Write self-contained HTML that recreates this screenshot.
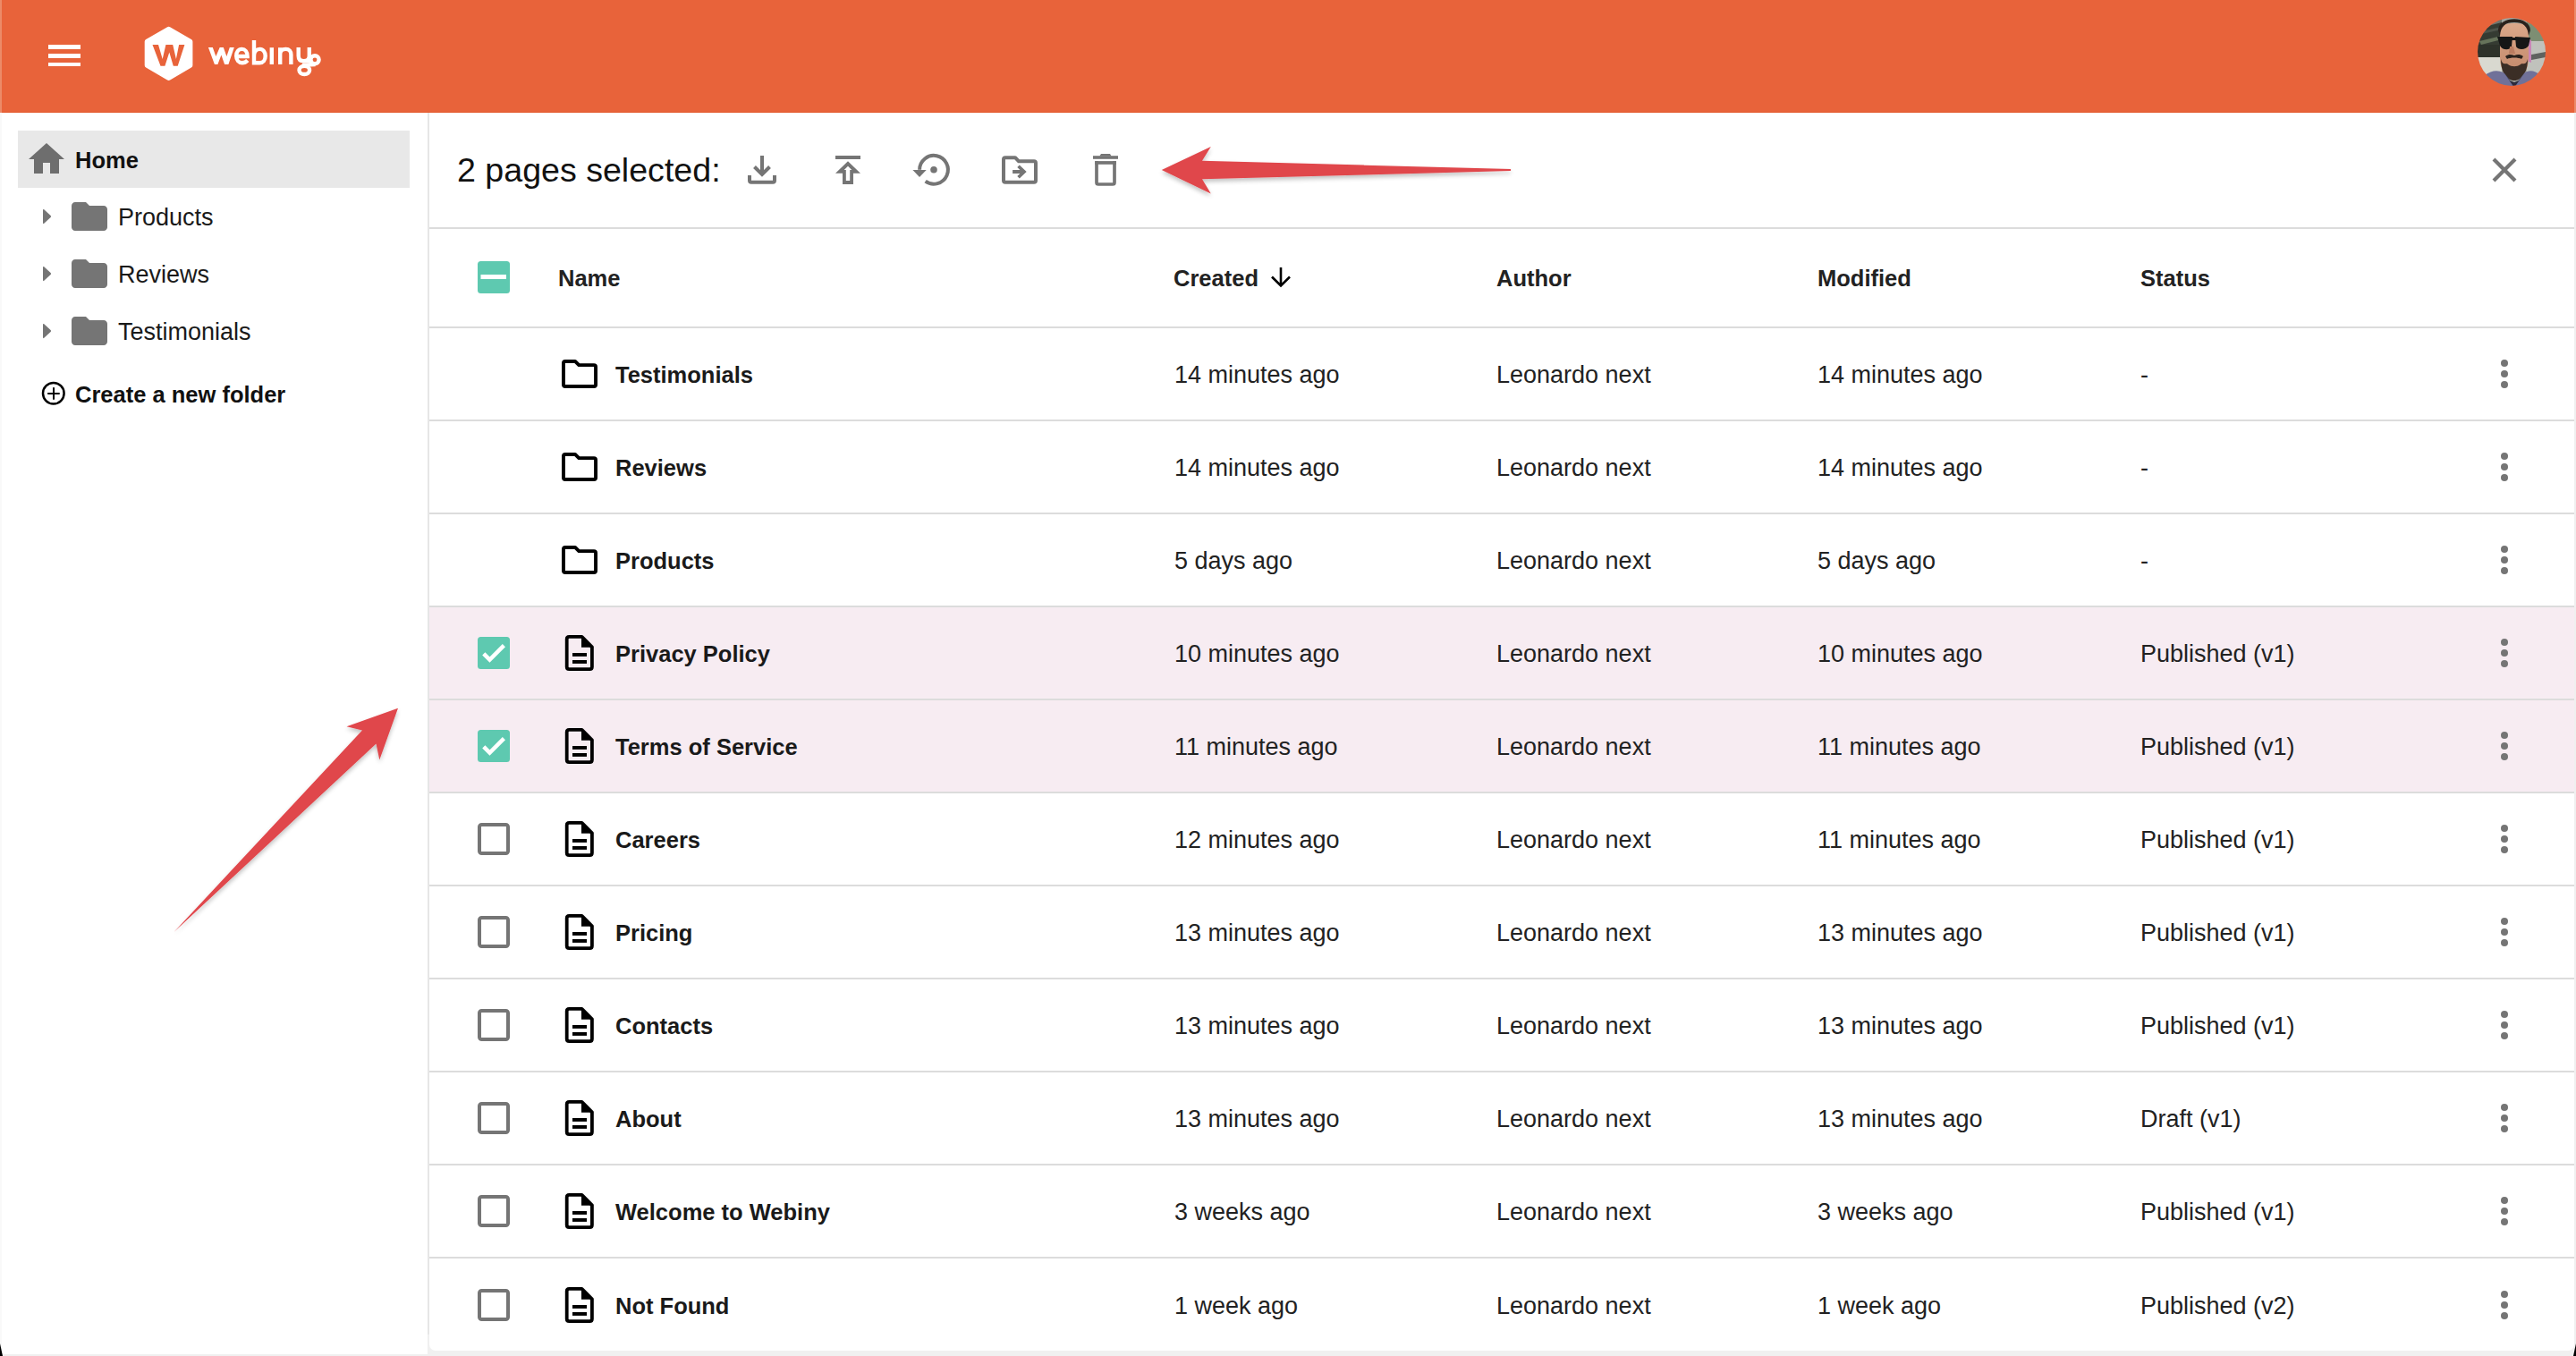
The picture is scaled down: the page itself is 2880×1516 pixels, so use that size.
<!DOCTYPE html>
<html><head><meta charset="utf-8"><style>
*{margin:0;padding:0;box-sizing:border-box}
html,body{width:2880px;height:1516px;overflow:hidden;background:#f0f0f0;font-family:"Liberation Sans",sans-serif}
.a{position:absolute}
.t{position:absolute;white-space:nowrap;line-height:1}
svg{position:absolute;overflow:visible}
</style></head>
<body>
<div class="a" style="left:0;top:0;width:2880px;height:126px;background:#e8633a"></div>
<div class="a" style="left:0;top:125px;width:2880px;height:1px;background:#e3582c"></div>
<div class="a" style="left:0;top:0;width:2px;height:126px;background:#ec8a68"></div>
<div class="a" style="left:2878px;top:0;width:2px;height:126px;background:#ec8a68"></div>
<div class="a" style="left:54px;top:50px;width:36px;height:4.5px;background:#fff"></div>
<div class="a" style="left:54px;top:60px;width:36px;height:4.5px;background:#fff"></div>
<div class="a" style="left:54px;top:69.5px;width:36px;height:4.5px;background:#fff"></div>
<svg style="left:0;top:0" width="400" height="126" viewBox="0 0 400 126">
<path d="M188.6 32.9 L212.4 46.5 L212.4 73 L188.6 87 L164.7 73 L164.7 46.5 Z" fill="#fff" stroke="#fff" stroke-width="6" stroke-linejoin="round"/>
<path d="M170.5 50.1 L177 50.1 L181.7 66 L185.4 50.1 L193.2 50.1 L196.9 66 L200.1 50.1 L206.4 50.1 L198.7 73.8 L193.8 73.8 L189.3 58.5 L184.4 73.8 L179.5 73.8 Z" fill="#e8633a"/>
<path d="M232.9 52.9 L237.8 52.9 L241.4 62.9 L245.7 52.9 L249.8 52.9 L253.4 62.9 L256.8 52.9 L261.8 52.9 L255.4 72 L251.1 72 L247.4 61.4 L243.4 72 L239.9 72 Z" fill="#fff"/>
<g fill="none" stroke="#fff" stroke-width="4.4">
<path d="M264.2 63 L276.6 63 C276.6 58 274 54.9 270.4 54.9 C266.5 54.9 264.2 58.2 264.2 62.6 C264.2 67.2 266.8 70.3 270.8 70.3 C273.2 70.3 275.2 69.3 276.8 67.5"/>
<path d="M284 45.1 L284 70.3 L290.4 70.3 C294.2 70.3 296.7 67.2 296.7 62.6 C296.7 58.2 294.2 54.9 290.4 54.9 C286.8 54.9 284 58 284 62.6"/>
<path d="M303.8 53.2 L303.8 72"/>
<path d="M313.2 53.2 L313.2 72 M313.2 60.5 C313.2 56.5 316 54.9 319.5 54.9 C323.5 54.9 325.4 57.5 325.4 61 L325.4 72"/>
<path d="M333.7 52.9 L333.7 62.5 C333.7 66.3 336 68.3 339.7 68.3 C343.5 68.3 345.8 66.3 345.8 62.5 M345.8 52.9 L345.8 70"/>
<ellipse cx="352" cy="66.8" rx="4.6" ry="4.6"/>
<path d="M352.5 72 L338 72.8"/>
<ellipse cx="340.3" cy="78.4" rx="5.8" ry="4.6"/>
</g>
</svg>
<svg style="left:2770px;top:20px" width="76" height="76" viewBox="0 0 76 76">
<defs><clipPath id="avc"><circle cx="38" cy="38" r="38"/></clipPath>
<filter id="avblur" x="-5%" y="-5%" width="110%" height="110%"><feGaussianBlur stdDeviation="0.7"/></filter>
<linearGradient id="skin" x1="0" y1="0" x2="0" y2="1"><stop offset="0" stop-color="#dba88a"/><stop offset="1" stop-color="#c08567"/></linearGradient></defs>
<g clip-path="url(#avc)"><g filter="url(#avblur)">
<rect x="-2" y="-2" width="80" height="80" fill="#a3a69f"/>
<rect x="0" y="0" width="27" height="46" fill="#353b33"/>
<path d="M0 6 L27 0 L27 5 L0 12 Z" fill="#70756d"/>
<path d="M0 16 L27 10 L27 13 L0 19 Z" fill="#4d534a"/>
<path d="M2 26 L27 20 L27 24 L4 30 Z" fill="#66735a"/>
<rect x="0" y="30" width="27" height="16" fill="#2e302c"/>
<rect x="0" y="44" width="27" height="20" fill="#d9d9d0"/>
<rect x="55" y="0" width="21" height="28" fill="#7d8e73"/>
<rect x="55" y="26" width="21" height="36" fill="#c0c2bc"/>
<path d="M55 42 L76 38 L76 44 L55 48 Z" fill="#5f625e"/>
<path d="M55 22 L60 25 L60 50 L55 48 Z" fill="#c986b6"/>
<path d="M25 12 C25 4 57 4 57 12 L57 44 C57 60 49 68 41 68 C33 68 25 60 25 44 Z" fill="url(#skin)"/>
<path d="M23 14 C23 -3 59 -3 59 14 L57 20 C56 9 51 5 41 5 C31 5 26 9 25 20 Z" fill="#2a231f"/>
<path d="M22 21 L39 21 L38 32 C36 37 27 36 25 31 Z M42 21 L59 22 L57 31 C54 36 45 36 43 32 Z M38 22 L43 22 L43 25 L38 25 Z" fill="#131615"/>
<path d="M36 32 L40 32 L42 40 L35 40 Z" fill="#b97c60"/>
<path d="M31 43 C35 40 38 41 41 42 C44 41 47 40 51 43 L49 46 C46 44 36 44 33 46 Z" fill="#2b221d"/>
<path d="M26 46 C28 54 32 50 34 52 C38 55 44 55 48 52 C50 50 54 54 56 46 C56 60 50 70 41 70 C32 70 26 60 26 46 Z" fill="#3a2d25"/>
<path d="M0 76 L8 64 C16 58 24 58 30 62 L41 76 Z M76 76 L70 64 C64 58 56 58 52 62 L41 76 Z" fill="#6f7199"/>
<path d="M30 62 L41 78 L52 62 L46 70 L41 72 L36 70 Z" fill="#2b2c3c"/>
</g></g></svg>
<div class="a" style="left:0;top:126px;width:478px;height:1388px;background:#fff"></div>
<div class="a" style="left:0;top:126px;width:2px;height:1388px;background:#f9f9f9"></div>
<div class="a" style="left:478px;top:126px;width:2px;height:1366px;background:#e6e6e6"></div>
<div class="a" style="left:20px;top:146px;width:438px;height:64px;background:#e8e8e8"></div>
<svg style="left:28px;top:154px" width="48" height="48" viewBox="0 0 24 24"><path d="M10 20v-6h4v6h5v-8h3L12 3 2 12h3v8z" fill="#6e6e6e"/></svg>
<div class="t" style="left:84.0px;top:167.4px;font-size:25.5px;font-weight:700;color:#111;">Home</div>

<svg style="left:0;top:0" width="130" height="500"><path d="M49 234 L56.6 241 Q57.6 242 56.6 243 L49 250 Q48 250.5 48 249 L48 235 Q48 233.5 49 234 Z" fill="#757575"/></svg>
<svg style="left:76px;top:218px" width="48" height="48" viewBox="0 0 24 24"><path d="M10 4H4c-1.1 0-1.99.9-1.99 2L2 18c0 1.1.9 2 2 2h16c1.1 0 2-.9 2-2V8c0-1.1-.9-2-2-2h-8l-2-2z" fill="#757575"/></svg>
<div class="t" style="left:132.0px;top:230.1px;font-size:27.0px;font-weight:400;color:#1a1a1a;">Products</div>

<svg style="left:0;top:0" width="130" height="500"><path d="M49 298 L56.6 305 Q57.6 306 56.6 307 L49 314 Q48 314.5 48 313 L48 299 Q48 297.5 49 298 Z" fill="#757575"/></svg>
<svg style="left:76px;top:282px" width="48" height="48" viewBox="0 0 24 24"><path d="M10 4H4c-1.1 0-1.99.9-1.99 2L2 18c0 1.1.9 2 2 2h16c1.1 0 2-.9 2-2V8c0-1.1-.9-2-2-2h-8l-2-2z" fill="#757575"/></svg>
<div class="t" style="left:132.0px;top:294.1px;font-size:27.0px;font-weight:400;color:#1a1a1a;">Reviews</div>

<svg style="left:0;top:0" width="130" height="500"><path d="M49 362 L56.6 369 Q57.6 370 56.6 371 L49 378 Q48 378.5 48 377 L48 363 Q48 361.5 49 362 Z" fill="#757575"/></svg>
<svg style="left:76px;top:346px" width="48" height="48" viewBox="0 0 24 24"><path d="M10 4H4c-1.1 0-1.99.9-1.99 2L2 18c0 1.1.9 2 2 2h16c1.1 0 2-.9 2-2V8c0-1.1-.9-2-2-2h-8l-2-2z" fill="#757575"/></svg>
<div class="t" style="left:132.0px;top:358.1px;font-size:27.0px;font-weight:400;color:#1a1a1a;">Testimonials</div>

<svg style="left:0;top:0" width="130" height="500"><circle cx="59.8" cy="439.8" r="11.8" fill="none" stroke="#000" stroke-width="2.5"/><rect x="53.2" y="439" width="13.5" height="2" fill="#000"/><rect x="59" y="433.2" width="2" height="13.5" fill="#000"/></svg>
<div class="t" style="left:84.0px;top:429.4px;font-size:25.5px;font-weight:700;color:#111;">Create a new folder</div>

<div class="a" style="left:480px;top:126px;width:2398px;height:128px;background:#fff"></div>
<div class="a" style="left:480px;top:254px;width:2398px;height:2px;background:#dcdcdc"></div>
<div class="a" style="left:2878px;top:126px;width:2px;height:1390px;background:#f0f0f0"></div>
<div class="t" style="left:511.0px;top:172.0px;font-size:37.6px;font-weight:400;color:#111;">2 pages selected:</div>

<svg style="left:0;top:0" width="1300" height="260">
<g fill="none" stroke="#757575" stroke-width="4">
<path d="M852 174 L852 196"/>
<path d="M843.5 186.5 L852 195 L860.5 186.5"/>
<path d="M838 196 L838 201.7 Q838 203.7 840 203.7 L864 203.7 Q866 203.7 866 201.7 L866 196"/>
</g>
<rect x="934" y="174" width="28" height="4" fill="#757575"/>
<path fill-rule="evenodd" d="M948 180.2 L962 193.8 L954 193.8 L954 206 L942 206 L942 193.8 L934 193.8 Z M948 185.7 L952.3 190 L950.2 190 L950.2 201.9 L945.8 201.9 L945.8 190 L943.7 190 Z" fill="#757575"/>
<path d="M1028.1 189.8 A15.9 15.9 0 1 1 1034.65 202.66" fill="none" stroke="#757575" stroke-width="4"/>
<path d="M1020.4 190 L1035.7 190 L1028 198 Z" fill="#757575"/>
<circle cx="1044" cy="189.8" r="3.8" fill="#757575"/>
<path d="M1122 178 Q1122 176.2 1124 176.2 L1135 176.2 L1139 180.3 L1156 180.3 Q1158 180.3 1158 182.3 L1158 201.8 Q1158 203.8 1156 203.8 L1124 203.8 Q1122 203.8 1122 201.8 Z" fill="none" stroke="#757575" stroke-width="4" stroke-linejoin="round"/>
<path d="M1132.1 190.1 L1140.4 190.1 L1137.3 187 L1139.8 184.4 L1147.7 191.9 L1139.8 199.6 L1137.3 197 L1140.4 193.9 L1132.1 193.9 Z" fill="#757575"/>
<rect x="1222" y="174.2" width="28" height="3.6" fill="#757575"/>
<path d="M1229.3 174.5 L1231 172.1 L1241 172.1 L1242.6 174.5 Z" fill="#757575"/>
<path d="M1226 180.1 L1226 204 Q1226 206 1228 206 L1244 206 Q1246 206 1246 204 L1246 180.1" fill="none" stroke="#757575" stroke-width="3.7"/>
<rect x="1224.2" y="180.1" width="23.8" height="3.7" fill="#757575"/>
</g>
</svg>
<svg style="left:0;top:0" width="2880" height="260"><path d="M2788 178 L2812 202 M2812 178 L2788 202" stroke="#757575" stroke-width="4.2" fill="none"/></svg>
<div class="a" style="left:480px;top:256px;width:2398px;height:109px;background:#fff"></div>
<div class="a" style="left:480px;top:365px;width:2398px;height:2px;background:#dcdcdc"></div>
<svg style="left:534px;top:292px" width="36" height="36" viewBox="0 0 36 36"><rect x="0" y="0" width="36" height="36" rx="3.5" fill="#5ec9b0"/><rect x="3.5" y="15" width="28.5" height="5" fill="#fff"/></svg>
<div class="t" style="left:624.0px;top:299.4px;font-size:25.5px;font-weight:700;color:#222;">Name</div>

<div class="t" style="left:1312.0px;top:299.4px;font-size:25.5px;font-weight:700;color:#222;">Created</div>

<svg style="left:0;top:0" width="1500" height="400"><path d="M1432 299 L1432 319 M1422 309.5 L1432 319.5 L1442 309.5" fill="none" stroke="#000" stroke-width="2.6"/></svg>
<div class="t" style="left:1673.0px;top:299.4px;font-size:25.5px;font-weight:700;color:#222;">Author</div>

<div class="t" style="left:2032.0px;top:299.4px;font-size:25.5px;font-weight:700;color:#222;">Modified</div>

<div class="t" style="left:2393.0px;top:299.4px;font-size:25.5px;font-weight:700;color:#222;">Status</div>

<div class="a" style="left:480px;top:367px;width:2398px;height:102px;background:#fff;"></div>
<div class="a" style="left:480px;top:469px;width:2398px;height:2px;background:#dcdcdc"></div>
<svg style="left:626px;top:398px" width="44" height="40" viewBox="0 0 44 40"><path d="M3.95 8 Q3.95 5.95 6 5.95 L17 5.95 L21.2 10.15 L38 10.15 Q40.05 10.15 40.05 12.2 L40.05 31.9 Q40.05 33.95 38 33.95 L6 33.95 Q3.95 33.95 3.95 31.9 Z" fill="none" stroke="#000" stroke-width="3.9" stroke-linejoin="round"/></svg>
<div class="t" style="left:688.0px;top:407.4px;font-size:25.5px;font-weight:700;color:#1a1a1a;">Testimonials</div>

<div class="t" style="left:1313.0px;top:406.1px;font-size:27.0px;font-weight:400;color:#222;">14 minutes ago</div>

<div class="t" style="left:1673.0px;top:406.1px;font-size:27.0px;font-weight:400;color:#222;">Leonardo next</div>

<div class="t" style="left:2032.0px;top:406.1px;font-size:27.0px;font-weight:400;color:#222;">14 minutes ago</div>

<div class="t" style="left:2393.0px;top:406.1px;font-size:27.0px;font-weight:400;color:#222;">-</div>

<svg style="left:2790px;top:398px" width="20" height="40"><circle cx="10" cy="8" r="4" fill="#757575"/><circle cx="10" cy="20" r="4" fill="#757575"/><circle cx="10" cy="32" r="4" fill="#757575"/></svg>
<div class="a" style="left:480px;top:471px;width:2398px;height:102px;background:#fff;"></div>
<div class="a" style="left:480px;top:573px;width:2398px;height:2px;background:#dcdcdc"></div>
<svg style="left:626px;top:502px" width="44" height="40" viewBox="0 0 44 40"><path d="M3.95 8 Q3.95 5.95 6 5.95 L17 5.95 L21.2 10.15 L38 10.15 Q40.05 10.15 40.05 12.2 L40.05 31.9 Q40.05 33.95 38 33.95 L6 33.95 Q3.95 33.95 3.95 31.9 Z" fill="none" stroke="#000" stroke-width="3.9" stroke-linejoin="round"/></svg>
<div class="t" style="left:688.0px;top:511.4px;font-size:25.5px;font-weight:700;color:#1a1a1a;">Reviews</div>

<div class="t" style="left:1313.0px;top:510.1px;font-size:27.0px;font-weight:400;color:#222;">14 minutes ago</div>

<div class="t" style="left:1673.0px;top:510.1px;font-size:27.0px;font-weight:400;color:#222;">Leonardo next</div>

<div class="t" style="left:2032.0px;top:510.1px;font-size:27.0px;font-weight:400;color:#222;">14 minutes ago</div>

<div class="t" style="left:2393.0px;top:510.1px;font-size:27.0px;font-weight:400;color:#222;">-</div>

<svg style="left:2790px;top:502px" width="20" height="40"><circle cx="10" cy="8" r="4" fill="#757575"/><circle cx="10" cy="20" r="4" fill="#757575"/><circle cx="10" cy="32" r="4" fill="#757575"/></svg>
<div class="a" style="left:480px;top:575px;width:2398px;height:102px;background:#fff;"></div>
<div class="a" style="left:480px;top:677px;width:2398px;height:2px;background:#dcdcdc"></div>
<svg style="left:626px;top:606px" width="44" height="40" viewBox="0 0 44 40"><path d="M3.95 8 Q3.95 5.95 6 5.95 L17 5.95 L21.2 10.15 L38 10.15 Q40.05 10.15 40.05 12.2 L40.05 31.9 Q40.05 33.95 38 33.95 L6 33.95 Q3.95 33.95 3.95 31.9 Z" fill="none" stroke="#000" stroke-width="3.9" stroke-linejoin="round"/></svg>
<div class="t" style="left:688.0px;top:615.4px;font-size:25.5px;font-weight:700;color:#1a1a1a;">Products</div>

<div class="t" style="left:1313.0px;top:614.1px;font-size:27.0px;font-weight:400;color:#222;">5 days ago</div>

<div class="t" style="left:1673.0px;top:614.1px;font-size:27.0px;font-weight:400;color:#222;">Leonardo next</div>

<div class="t" style="left:2032.0px;top:614.1px;font-size:27.0px;font-weight:400;color:#222;">5 days ago</div>

<div class="t" style="left:2393.0px;top:614.1px;font-size:27.0px;font-weight:400;color:#222;">-</div>

<svg style="left:2790px;top:606px" width="20" height="40"><circle cx="10" cy="8" r="4" fill="#757575"/><circle cx="10" cy="20" r="4" fill="#757575"/><circle cx="10" cy="32" r="4" fill="#757575"/></svg>
<div class="a" style="left:480px;top:679px;width:2398px;height:102px;background:#f7ecf2;"></div>
<div class="a" style="left:480px;top:781px;width:2398px;height:2px;background:#dcdcdc"></div>
<svg style="left:534px;top:712px" width="36" height="36" viewBox="0 0 36 36"><rect x="0" y="0" width="36" height="36" rx="3.5" fill="#5ec9b0"/><path d="M6.8 18.8 L13.5 25.5 L29.4 9.6" fill="none" stroke="#fff" stroke-width="4.5"/></svg>
<svg style="left:630px;top:708px" width="36" height="44" viewBox="0 0 36 44"><path d="M3.7 6.5 Q3.7 3.9 6.3 3.9 L20.5 3.9 L31.9 15.3 L31.9 37.5 Q31.9 40.1 29.3 40.1 L6.3 40.1 Q3.7 40.1 3.7 37.5 Z" fill="none" stroke="#000" stroke-width="3.8" stroke-linejoin="round"/><path d="M20 2.5 L20 15.8 L33.3 15.8 Z" fill="#000"/><rect x="10" y="22" width="16" height="3.9" fill="#000"/><rect x="10" y="30" width="16" height="3.9" fill="#000"/></svg>
<div class="t" style="left:688.0px;top:719.4px;font-size:25.5px;font-weight:700;color:#1a1a1a;">Privacy Policy</div>

<div class="t" style="left:1313.0px;top:718.1px;font-size:27.0px;font-weight:400;color:#222;">10 minutes ago</div>

<div class="t" style="left:1673.0px;top:718.1px;font-size:27.0px;font-weight:400;color:#222;">Leonardo next</div>

<div class="t" style="left:2032.0px;top:718.1px;font-size:27.0px;font-weight:400;color:#222;">10 minutes ago</div>

<div class="t" style="left:2393.0px;top:718.1px;font-size:27.0px;font-weight:400;color:#222;">Published (v1)</div>

<svg style="left:2790px;top:710px" width="20" height="40"><circle cx="10" cy="8" r="4" fill="#757575"/><circle cx="10" cy="20" r="4" fill="#757575"/><circle cx="10" cy="32" r="4" fill="#757575"/></svg>
<div class="a" style="left:480px;top:783px;width:2398px;height:102px;background:#f7ecf2;"></div>
<div class="a" style="left:480px;top:885px;width:2398px;height:2px;background:#dcdcdc"></div>
<svg style="left:534px;top:816px" width="36" height="36" viewBox="0 0 36 36"><rect x="0" y="0" width="36" height="36" rx="3.5" fill="#5ec9b0"/><path d="M6.8 18.8 L13.5 25.5 L29.4 9.6" fill="none" stroke="#fff" stroke-width="4.5"/></svg>
<svg style="left:630px;top:812px" width="36" height="44" viewBox="0 0 36 44"><path d="M3.7 6.5 Q3.7 3.9 6.3 3.9 L20.5 3.9 L31.9 15.3 L31.9 37.5 Q31.9 40.1 29.3 40.1 L6.3 40.1 Q3.7 40.1 3.7 37.5 Z" fill="none" stroke="#000" stroke-width="3.8" stroke-linejoin="round"/><path d="M20 2.5 L20 15.8 L33.3 15.8 Z" fill="#000"/><rect x="10" y="22" width="16" height="3.9" fill="#000"/><rect x="10" y="30" width="16" height="3.9" fill="#000"/></svg>
<div class="t" style="left:688.0px;top:823.4px;font-size:25.5px;font-weight:700;color:#1a1a1a;">Terms of Service</div>

<div class="t" style="left:1313.0px;top:822.1px;font-size:27.0px;font-weight:400;color:#222;">11 minutes ago</div>

<div class="t" style="left:1673.0px;top:822.1px;font-size:27.0px;font-weight:400;color:#222;">Leonardo next</div>

<div class="t" style="left:2032.0px;top:822.1px;font-size:27.0px;font-weight:400;color:#222;">11 minutes ago</div>

<div class="t" style="left:2393.0px;top:822.1px;font-size:27.0px;font-weight:400;color:#222;">Published (v1)</div>

<svg style="left:2790px;top:814px" width="20" height="40"><circle cx="10" cy="8" r="4" fill="#757575"/><circle cx="10" cy="20" r="4" fill="#757575"/><circle cx="10" cy="32" r="4" fill="#757575"/></svg>
<div class="a" style="left:480px;top:887px;width:2398px;height:102px;background:#fff;"></div>
<div class="a" style="left:480px;top:989px;width:2398px;height:2px;background:#dcdcdc"></div>
<svg style="left:534px;top:920px" width="36" height="36" viewBox="0 0 36 36"><rect x="2" y="2" width="32" height="32" rx="2.5" fill="none" stroke="#757575" stroke-width="4"/></svg>
<svg style="left:630px;top:916px" width="36" height="44" viewBox="0 0 36 44"><path d="M3.7 6.5 Q3.7 3.9 6.3 3.9 L20.5 3.9 L31.9 15.3 L31.9 37.5 Q31.9 40.1 29.3 40.1 L6.3 40.1 Q3.7 40.1 3.7 37.5 Z" fill="none" stroke="#000" stroke-width="3.8" stroke-linejoin="round"/><path d="M20 2.5 L20 15.8 L33.3 15.8 Z" fill="#000"/><rect x="10" y="22" width="16" height="3.9" fill="#000"/><rect x="10" y="30" width="16" height="3.9" fill="#000"/></svg>
<div class="t" style="left:688.0px;top:927.4px;font-size:25.5px;font-weight:700;color:#1a1a1a;">Careers</div>

<div class="t" style="left:1313.0px;top:926.1px;font-size:27.0px;font-weight:400;color:#222;">12 minutes ago</div>

<div class="t" style="left:1673.0px;top:926.1px;font-size:27.0px;font-weight:400;color:#222;">Leonardo next</div>

<div class="t" style="left:2032.0px;top:926.1px;font-size:27.0px;font-weight:400;color:#222;">11 minutes ago</div>

<div class="t" style="left:2393.0px;top:926.1px;font-size:27.0px;font-weight:400;color:#222;">Published (v1)</div>

<svg style="left:2790px;top:918px" width="20" height="40"><circle cx="10" cy="8" r="4" fill="#757575"/><circle cx="10" cy="20" r="4" fill="#757575"/><circle cx="10" cy="32" r="4" fill="#757575"/></svg>
<div class="a" style="left:480px;top:991px;width:2398px;height:102px;background:#fff;"></div>
<div class="a" style="left:480px;top:1093px;width:2398px;height:2px;background:#dcdcdc"></div>
<svg style="left:534px;top:1024px" width="36" height="36" viewBox="0 0 36 36"><rect x="2" y="2" width="32" height="32" rx="2.5" fill="none" stroke="#757575" stroke-width="4"/></svg>
<svg style="left:630px;top:1020px" width="36" height="44" viewBox="0 0 36 44"><path d="M3.7 6.5 Q3.7 3.9 6.3 3.9 L20.5 3.9 L31.9 15.3 L31.9 37.5 Q31.9 40.1 29.3 40.1 L6.3 40.1 Q3.7 40.1 3.7 37.5 Z" fill="none" stroke="#000" stroke-width="3.8" stroke-linejoin="round"/><path d="M20 2.5 L20 15.8 L33.3 15.8 Z" fill="#000"/><rect x="10" y="22" width="16" height="3.9" fill="#000"/><rect x="10" y="30" width="16" height="3.9" fill="#000"/></svg>
<div class="t" style="left:688.0px;top:1031.4px;font-size:25.5px;font-weight:700;color:#1a1a1a;">Pricing</div>

<div class="t" style="left:1313.0px;top:1030.1px;font-size:27.0px;font-weight:400;color:#222;">13 minutes ago</div>

<div class="t" style="left:1673.0px;top:1030.1px;font-size:27.0px;font-weight:400;color:#222;">Leonardo next</div>

<div class="t" style="left:2032.0px;top:1030.1px;font-size:27.0px;font-weight:400;color:#222;">13 minutes ago</div>

<div class="t" style="left:2393.0px;top:1030.1px;font-size:27.0px;font-weight:400;color:#222;">Published (v1)</div>

<svg style="left:2790px;top:1022px" width="20" height="40"><circle cx="10" cy="8" r="4" fill="#757575"/><circle cx="10" cy="20" r="4" fill="#757575"/><circle cx="10" cy="32" r="4" fill="#757575"/></svg>
<div class="a" style="left:480px;top:1095px;width:2398px;height:102px;background:#fff;"></div>
<div class="a" style="left:480px;top:1197px;width:2398px;height:2px;background:#dcdcdc"></div>
<svg style="left:534px;top:1128px" width="36" height="36" viewBox="0 0 36 36"><rect x="2" y="2" width="32" height="32" rx="2.5" fill="none" stroke="#757575" stroke-width="4"/></svg>
<svg style="left:630px;top:1124px" width="36" height="44" viewBox="0 0 36 44"><path d="M3.7 6.5 Q3.7 3.9 6.3 3.9 L20.5 3.9 L31.9 15.3 L31.9 37.5 Q31.9 40.1 29.3 40.1 L6.3 40.1 Q3.7 40.1 3.7 37.5 Z" fill="none" stroke="#000" stroke-width="3.8" stroke-linejoin="round"/><path d="M20 2.5 L20 15.8 L33.3 15.8 Z" fill="#000"/><rect x="10" y="22" width="16" height="3.9" fill="#000"/><rect x="10" y="30" width="16" height="3.9" fill="#000"/></svg>
<div class="t" style="left:688.0px;top:1135.4px;font-size:25.5px;font-weight:700;color:#1a1a1a;">Contacts</div>

<div class="t" style="left:1313.0px;top:1134.1px;font-size:27.0px;font-weight:400;color:#222;">13 minutes ago</div>

<div class="t" style="left:1673.0px;top:1134.1px;font-size:27.0px;font-weight:400;color:#222;">Leonardo next</div>

<div class="t" style="left:2032.0px;top:1134.1px;font-size:27.0px;font-weight:400;color:#222;">13 minutes ago</div>

<div class="t" style="left:2393.0px;top:1134.1px;font-size:27.0px;font-weight:400;color:#222;">Published (v1)</div>

<svg style="left:2790px;top:1126px" width="20" height="40"><circle cx="10" cy="8" r="4" fill="#757575"/><circle cx="10" cy="20" r="4" fill="#757575"/><circle cx="10" cy="32" r="4" fill="#757575"/></svg>
<div class="a" style="left:480px;top:1199px;width:2398px;height:102px;background:#fff;"></div>
<div class="a" style="left:480px;top:1301px;width:2398px;height:2px;background:#dcdcdc"></div>
<svg style="left:534px;top:1232px" width="36" height="36" viewBox="0 0 36 36"><rect x="2" y="2" width="32" height="32" rx="2.5" fill="none" stroke="#757575" stroke-width="4"/></svg>
<svg style="left:630px;top:1228px" width="36" height="44" viewBox="0 0 36 44"><path d="M3.7 6.5 Q3.7 3.9 6.3 3.9 L20.5 3.9 L31.9 15.3 L31.9 37.5 Q31.9 40.1 29.3 40.1 L6.3 40.1 Q3.7 40.1 3.7 37.5 Z" fill="none" stroke="#000" stroke-width="3.8" stroke-linejoin="round"/><path d="M20 2.5 L20 15.8 L33.3 15.8 Z" fill="#000"/><rect x="10" y="22" width="16" height="3.9" fill="#000"/><rect x="10" y="30" width="16" height="3.9" fill="#000"/></svg>
<div class="t" style="left:688.0px;top:1239.4px;font-size:25.5px;font-weight:700;color:#1a1a1a;">About</div>

<div class="t" style="left:1313.0px;top:1238.1px;font-size:27.0px;font-weight:400;color:#222;">13 minutes ago</div>

<div class="t" style="left:1673.0px;top:1238.1px;font-size:27.0px;font-weight:400;color:#222;">Leonardo next</div>

<div class="t" style="left:2032.0px;top:1238.1px;font-size:27.0px;font-weight:400;color:#222;">13 minutes ago</div>

<div class="t" style="left:2393.0px;top:1238.1px;font-size:27.0px;font-weight:400;color:#222;">Draft (v1)</div>

<svg style="left:2790px;top:1230px" width="20" height="40"><circle cx="10" cy="8" r="4" fill="#757575"/><circle cx="10" cy="20" r="4" fill="#757575"/><circle cx="10" cy="32" r="4" fill="#757575"/></svg>
<div class="a" style="left:480px;top:1303px;width:2398px;height:102px;background:#fff;"></div>
<div class="a" style="left:480px;top:1405px;width:2398px;height:2px;background:#dcdcdc"></div>
<svg style="left:534px;top:1336px" width="36" height="36" viewBox="0 0 36 36"><rect x="2" y="2" width="32" height="32" rx="2.5" fill="none" stroke="#757575" stroke-width="4"/></svg>
<svg style="left:630px;top:1332px" width="36" height="44" viewBox="0 0 36 44"><path d="M3.7 6.5 Q3.7 3.9 6.3 3.9 L20.5 3.9 L31.9 15.3 L31.9 37.5 Q31.9 40.1 29.3 40.1 L6.3 40.1 Q3.7 40.1 3.7 37.5 Z" fill="none" stroke="#000" stroke-width="3.8" stroke-linejoin="round"/><path d="M20 2.5 L20 15.8 L33.3 15.8 Z" fill="#000"/><rect x="10" y="22" width="16" height="3.9" fill="#000"/><rect x="10" y="30" width="16" height="3.9" fill="#000"/></svg>
<div class="t" style="left:688.0px;top:1343.4px;font-size:25.5px;font-weight:700;color:#1a1a1a;">Welcome to Webiny</div>

<div class="t" style="left:1313.0px;top:1342.1px;font-size:27.0px;font-weight:400;color:#222;">3 weeks ago</div>

<div class="t" style="left:1673.0px;top:1342.1px;font-size:27.0px;font-weight:400;color:#222;">Leonardo next</div>

<div class="t" style="left:2032.0px;top:1342.1px;font-size:27.0px;font-weight:400;color:#222;">3 weeks ago</div>

<div class="t" style="left:2393.0px;top:1342.1px;font-size:27.0px;font-weight:400;color:#222;">Published (v1)</div>

<svg style="left:2790px;top:1334px" width="20" height="40"><circle cx="10" cy="8" r="4" fill="#757575"/><circle cx="10" cy="20" r="4" fill="#757575"/><circle cx="10" cy="32" r="4" fill="#757575"/></svg>
<div class="a" style="left:480px;top:1407px;width:2398px;height:103px;background:#fff;border-radius:0 0 7px 7px;"></div>
<svg style="left:534px;top:1441px" width="36" height="36" viewBox="0 0 36 36"><rect x="2" y="2" width="32" height="32" rx="2.5" fill="none" stroke="#757575" stroke-width="4"/></svg>
<svg style="left:630px;top:1437px" width="36" height="44" viewBox="0 0 36 44"><path d="M3.7 6.5 Q3.7 3.9 6.3 3.9 L20.5 3.9 L31.9 15.3 L31.9 37.5 Q31.9 40.1 29.3 40.1 L6.3 40.1 Q3.7 40.1 3.7 37.5 Z" fill="none" stroke="#000" stroke-width="3.8" stroke-linejoin="round"/><path d="M20 2.5 L20 15.8 L33.3 15.8 Z" fill="#000"/><rect x="10" y="22" width="16" height="3.9" fill="#000"/><rect x="10" y="30" width="16" height="3.9" fill="#000"/></svg>
<div class="t" style="left:688.0px;top:1448.4px;font-size:25.5px;font-weight:700;color:#1a1a1a;">Not Found</div>

<div class="t" style="left:1313.0px;top:1447.1px;font-size:27.0px;font-weight:400;color:#222;">1 week ago</div>

<div class="t" style="left:1673.0px;top:1447.1px;font-size:27.0px;font-weight:400;color:#222;">Leonardo next</div>

<div class="t" style="left:2032.0px;top:1447.1px;font-size:27.0px;font-weight:400;color:#222;">1 week ago</div>

<div class="t" style="left:2393.0px;top:1447.1px;font-size:27.0px;font-weight:400;color:#222;">Published (v2)</div>

<svg style="left:2790px;top:1439px" width="20" height="40"><circle cx="10" cy="8" r="4" fill="#757575"/><circle cx="10" cy="20" r="4" fill="#757575"/><circle cx="10" cy="32" r="4" fill="#757575"/></svg>
<svg style="left:0;top:0" width="2880" height="1516">
<defs><filter id="sh" x="-10%" y="-10%" width="120%" height="130%"><feGaussianBlur in="SourceAlpha" stdDeviation="2.5"/><feOffset dx="0" dy="3"/><feComponentTransfer><feFuncA type="linear" slope="0.25"/></feComponentTransfer><feMerge><feMergeNode/><feMergeNode in="SourceGraphic"/></feMerge></filter></defs>
<g filter="url(#sh)" fill="#e0464b">
<path d="M1298.8 190 L1353.8 163.9 L1344 179.8 L1689 189 L1689 191 L1344 200.3 L1353.8 216.4 Z"/>
<path d="M445 791.7 L424.3 849.5 L420.5 831.5 L194.5 1042 L405 816.5 L387.5 812.3 Z"/>
</g></svg>
<svg style="left:0;top:1490px" width="10" height="26"><path d="M0 12 L3 26 L0 26 Z" fill="#000"/></svg>
<svg style="left:2870px;top:1490px" width="10" height="26"><path d="M10 12 L7 26 L10 26 Z" fill="#000"/></svg>
<script>(function(){var w=window.innerWidth;if(w&&Math.abs(w-2880)>2){document.documentElement.style.zoom=(w/2880);}})();</script>
</body></html>
